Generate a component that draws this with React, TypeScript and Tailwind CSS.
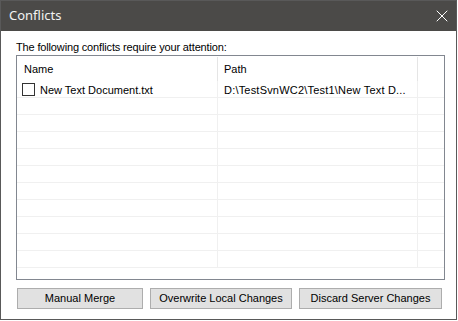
import { X } from "lucide-react";

const rows = Array.from({ length: 11 });

function Row({ first }: { first?: boolean }) {
  return (
    <div className="flex h-[17px] border-b border-[#f0f0f0] text-[11px] leading-[16px] text-black">
      <div className="flex w-[201px] shrink-0 items-center border-r border-[#f0f0f0] pl-[5px] pt-px">
        {first && (
          <>
            <span className="mr-[5px] h-[13px] w-[13px] border border-[#333333] bg-white" />
            <span>New Text Document.txt</span>
          </>
        )}
      </div>
      <div className="flex w-[200px] shrink-0 items-center border-r border-[#f0f0f0] pl-[6px] pt-px">
        {first && <span className="tracking-[0.2px]">D:\TestSvnWC2\Test1\New Text D...</span>}
      </div>
      <div className="grow" />
    </div>
  );
}

function Button({ label, width }: { label: string; width: string }) {
  return (
    <button
      className={`${width} h-[21px] border border-[#adadad] bg-[#e1e1e1] text-[11px] leading-[19px] text-black`}
    >
      {label}
    </button>
  );
}

export default function App() {
  return (
    <div className="h-[321px] w-[458px] bg-white font-['Liberation_Sans',Arial,sans-serif]">
      <div className="flex h-[320px] w-[457px] flex-col border border-[#595959]">
        <div className="flex h-[30px] shrink-0 items-center justify-between bg-[#4b4a48] pl-[8px] pr-[4px]">
          <span className="font-['Noto_Sans',sans-serif] text-[13px] text-[#f2f2f2]">Conflicts</span>
          <X className="h-[20px] w-[20px] text-white" strokeWidth={1.2} />
        </div>
        <div className="flex grow flex-col pl-[15px] pt-[8px]">
          <div className="h-[16px] text-[11px] leading-[16px] tracking-[-0.15px] text-black">
            The following conflicts require your attention:
          </div>
          <div className="flex h-[225px] w-[429px] flex-col overflow-hidden border border-[#828790] bg-white">
            <div className="flex h-[25px] shrink-0 pt-px text-[11px] text-black">
              <div className="flex w-[201px] items-center border-r border-[#e5e5e5] pl-[7px]">Name</div>
              <div className="flex w-[200px] items-center border-r border-[#e5e5e5] pl-[6px]">Path</div>
              <div className="grow" />
            </div>
            {rows.map((_, i) => (
              <Row key={i} first={i === 0} />
            ))}
          </div>
          <div className="mt-[8px] flex gap-[7px] pl-[1px]">
            <Button label="Manual Merge" width="w-[126px]" />
            <Button label="Overwrite Local Changes" width="w-[142px]" />
            <Button label="Discard Server Changes" width="w-[143px]" />
          </div>
        </div>
      </div>
    </div>
  );
}
